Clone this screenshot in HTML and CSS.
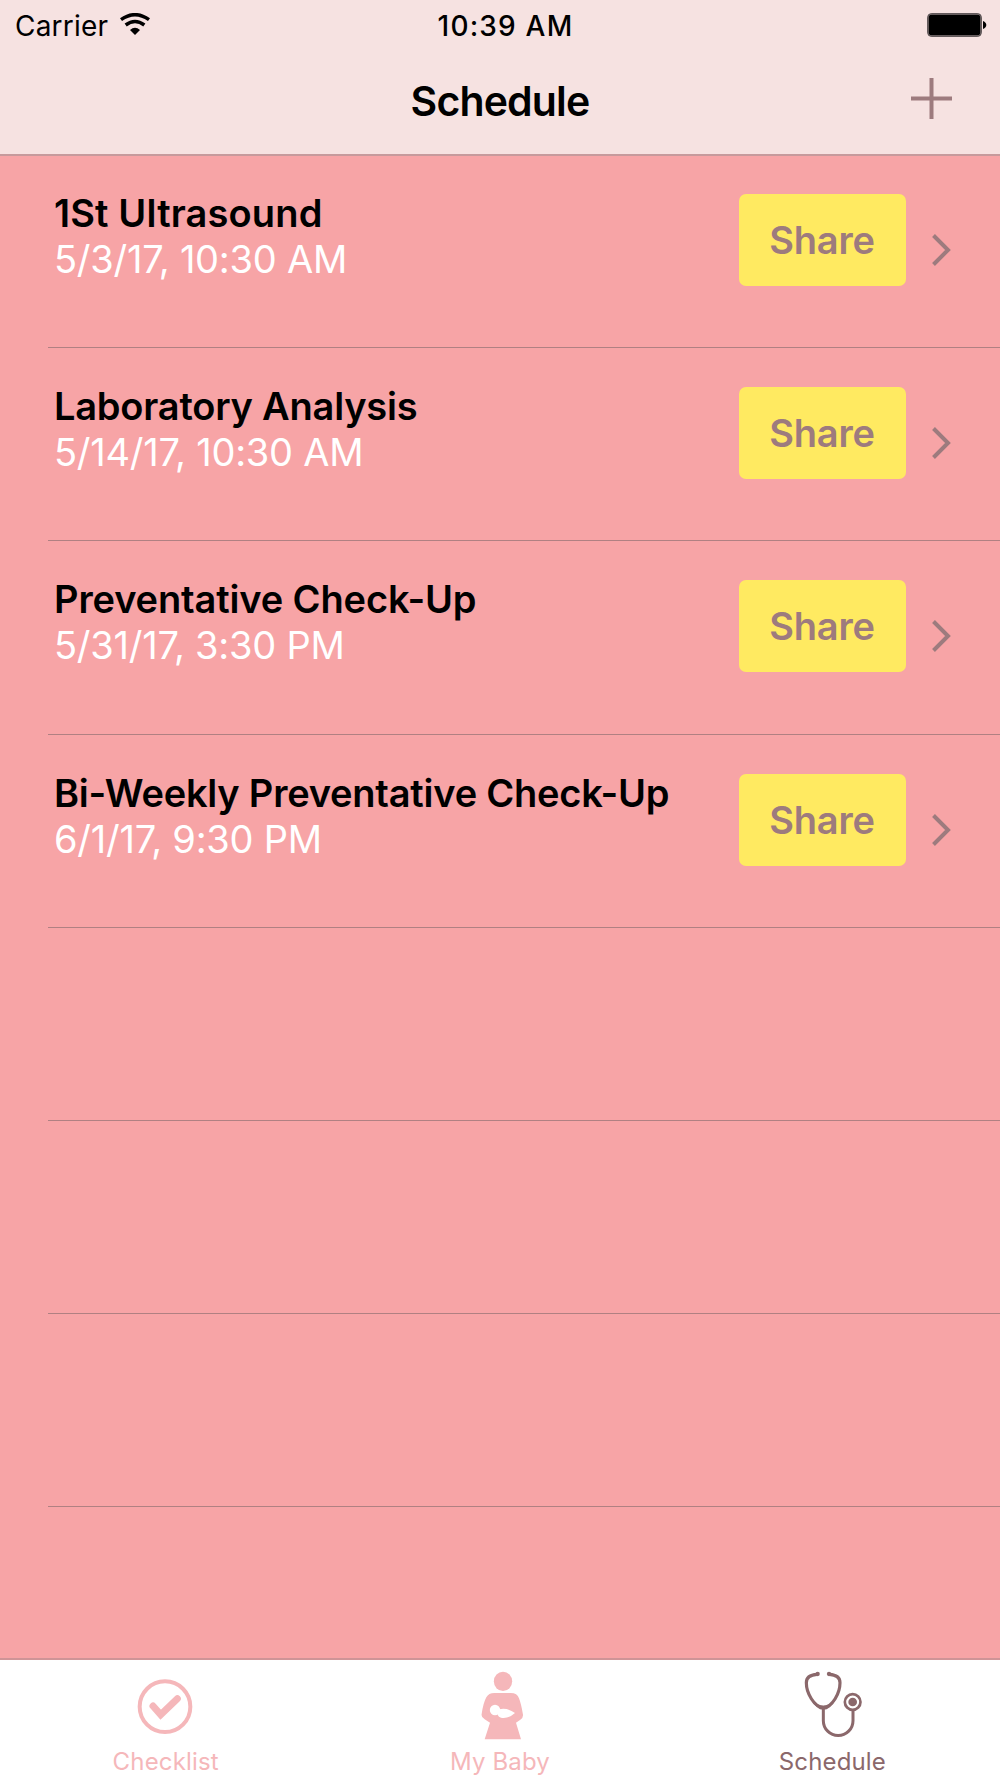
FILE: index.html
```html
<!DOCTYPE html>
<html lang="en">
<head>
<meta charset="utf-8">
<title>Schedule</title>
<link rel="stylesheet" href="styles.css">
</head>
<body>
<div class="app">
  <header class="header">
    <div class="status">
      <div class="status-left">
        <span class="carrier">Carrier</span>
        <svg class="wifi" viewBox="0 0 90 66" width="30" height="22">
          <path d="M3 20Q45-10 87 20" fill="none" stroke="#000" stroke-width="10.500"/>
          <path d="M17 36Q45 15 73 36" fill="none" stroke="#000" stroke-width="10.500"/>
          <path d="M30 51Q45 37 60 51L45 66Z"/>
        </svg>
      </div>
      <span class="time">10:39 AM</span>
      <svg class="battery" viewBox="0 0 60 24" width="60" height="24">
        <rect x="1" y="1" width="53" height="22" rx="3.5" fill="#000" stroke="#8d8182" stroke-width="1.4"/>
        <rect x=".6" y=".6" width="53.8" height="22.8" rx="4" fill="none" stroke="#3b3536" stroke-width=".7"/>
        <path d="M56 8Q59.3 9.500 59.300 12T56 16Z"/>
      </svg>
    </div>
    <div class="nav">
      <h1 class="nav-title">Schedule</h1>
      <svg class="add" viewBox="0 0 41 41" width="41" height="41"><path d="M0 20.500H41M20.500 0V41" stroke="#9d7b7e" stroke-width="4"/></svg>
    </div>
  </header>

  <main class="list">
    <article class="row">
      <div class="row-text"><div class="name">1St Ultrasound</div><div class="date">5/3/17, 10:30 AM</div></div>
      <button class="share">Share</button>
      <svg class="chevron" viewBox="0 0 19 32" width="19" height="32"><path d="M1.500 1.500L16 16L1.500 30.500" fill="none" stroke="#9d7b7e" stroke-width="4"/></svg>
    </article>
    <article class="row">
      <div class="row-text"><div class="name">Laboratory Analysis</div><div class="date">5/14/17, 10:30 AM</div></div>
      <button class="share">Share</button>
      <svg class="chevron" viewBox="0 0 19 32" width="19" height="32"><path d="M1.500 1.500L16 16L1.500 30.500" fill="none" stroke="#9d7b7e" stroke-width="4"/></svg>
    </article>
    <article class="row">
      <div class="row-text"><div class="name">Preventative Check-Up</div><div class="date">5/31/17, 3:30 PM</div></div>
      <button class="share">Share</button>
      <svg class="chevron" viewBox="0 0 19 32" width="19" height="32"><path d="M1.500 1.500L16 16L1.500 30.500" fill="none" stroke="#9d7b7e" stroke-width="4"/></svg>
    </article>
    <article class="row">
      <div class="row-text"><div class="name">Bi-Weekly Preventative Check-Up</div><div class="date">6/1/17, 9:30 PM</div></div>
      <button class="share">Share</button>
      <svg class="chevron" viewBox="0 0 19 32" width="19" height="32"><path d="M1.500 1.500L16 16L1.500 30.500" fill="none" stroke="#9d7b7e" stroke-width="4"/></svg>
    </article>
    <div class="row"></div>
    <div class="row"></div>
    <div class="row"></div>
  </main>

  <nav class="tabs">
    <a class="tab">
      <svg viewBox="80 30 300 261" width="100" height="87">
        <circle cx="224" cy="170" r="76" fill="none" stroke="currentColor" stroke-width="12"/>
        <path d="M188 168L211 194L261 146" fill="none" stroke="currentColor" stroke-width="21" stroke-linecap="round"/>
      </svg>
      <span>Checklist</span>
    </a>
    <a class="tab">
      <svg viewBox="60 30 300 261" width="100" height="87">
        <ellipse cx="219" cy="94" rx="27.500" ry="29" fill="currentColor"/>
        <path d="M193 129H242Q262 129 267 145Q273 160 279 194Q280 204 271 209L258 218L273 268H164L180 218L164 208Q153 202 155 192Q160 158 169 142Q176 129 193 129Z" fill="currentColor"/>
        <path d="M207 178Q232 172 255 189Q235 207 213 203Q206 201 203 195Z" fill="#fff"/>
        <circle cx="195" cy="180" r="15.500" fill="#fff"/>
      </svg>
      <span>My Baby</span>
    </a>
    <a class="tab tab-active">
      <svg viewBox="70 30 300 261" width="100" height="87" fill="none" stroke="currentColor">
        <path d="M172 73Q140 75 140 98C140 128 163 172 191 172S241 128 241 98Q241 75 209 73" stroke-width="9.500"/>
        <path d="M155 149Q173 167 191 167T227 149Q212 179 191 179T155 149Z" fill="currentColor" stroke="none"/>
        <circle cx="174" cy="72" r="6.500" fill="currentColor" stroke="none"/>
        <circle cx="208" cy="72" r="6.500" fill="currentColor" stroke="none"/>
        <path d="M191 174V212A44.500 44.500 0 0 0 280 212V180" stroke-width="9"/>
        <circle cx="279" cy="156" r="23.500" stroke-width="8"/>
        <circle cx="279" cy="156" r="13" fill="currentColor" stroke="none"/>
      </svg>
      <span>Schedule</span>
    </a>
  </nav>
</div>
</body>
</html>
```
FILE: styles.css
```css
* { box-sizing: border-box; }

body {
  margin: 0;
  background: #f7a4a6;
  font-family: Inter, "Liberation Sans", sans-serif;
  color: #000;
}

.app {
  display: flex;
  flex-direction: column;
  width: 1000px;
  height: 1778px;
}

.header {
  flex: none;
  height: 156px;
  background: #f6e2e1;
  border-bottom: 2px solid #c69a9c;
}

.status {
  display: grid;
  grid-template-columns: 1fr auto 1fr;
  height: 50px;
  padding: 0 13px 0 15px;
  font-size: 28px;
  line-height: 52px;
}

.status-left {
  display: flex;
  align-items: flex-start;
  gap: 12px;
}

.carrier { letter-spacing: 0.2px; }

.wifi { margin-top: 13px; }

.time {
  padding-left: 9px;
  font-weight: 550;
  letter-spacing: 1.2px;
}

.battery {
  justify-self: end;
  margin-top: 13px;
}

.nav {
  display: grid;
  grid-template-columns: 1fr auto 1fr;
  height: 104px;
  padding-right: 48px;
  padding-left: 48px;
}

.nav-title {
  grid-column: 2;
  margin: 0;
  font-size: 41px;
  font-weight: 600;
  line-height: 102px;
  letter-spacing: -0.85px;
}

.add {
  justify-self: end;
  margin-top: 28px;
}

.list {
  flex: 1;
  min-height: 0;
  margin-top: -1px;
}

.row {
  display: flex;
  align-items: flex-start;
  height: 193.2px;
  margin-left: 48px;
  padding: 0 48px 0 6px;
  border-bottom: 1px solid #b08082;
}

.row-text {
  flex: 1;
  padding-top: 35px;
  line-height: 46px;
  font-size: 38px;
  white-space: nowrap;
}

.name {
  font-weight: 600;
  letter-spacing: -0.22px;
}

.row:nth-child(1) .name { letter-spacing: 0.15px; }
.row:nth-child(3) .name { letter-spacing: -0.13px; }

.date {
  color: #fff;
  letter-spacing: -0.24px;
}

.share {
  width: 167px;
  height: 92px;
  margin: 39px 27px 0 0;
  padding: 0 1px 0 0;
  border: 0;
  border-radius: 7px;
  background: #ffea61;
  color: #9d7b7e;
  font: 600 38px/92px Inter, "Liberation Sans", sans-serif;
  letter-spacing: -0.2px;
}

.chevron {
  margin-top: 79px;
  margin-right: 1px;
  margin-left: -1px;
}

.tabs {
  display: grid;
  grid-template-columns: repeat(3, 1fr);
  flex: none;
  height: 120px;
  border-top: 2px solid #cf9497;
  background: #fff;
}

.tab {
  display: flex;
  flex-direction: column;
  align-items: center;
  color: #f5b7ba;
  font-size: 24px;
  line-height: 30px;
  letter-spacing: 0.15px;
}

.tab svg { flex: none; }

.tab span { padding-right: 2px; }

.tab:nth-child(2) span { padding-right: 0; }

.tab-active { color: #8b686b; }
```
